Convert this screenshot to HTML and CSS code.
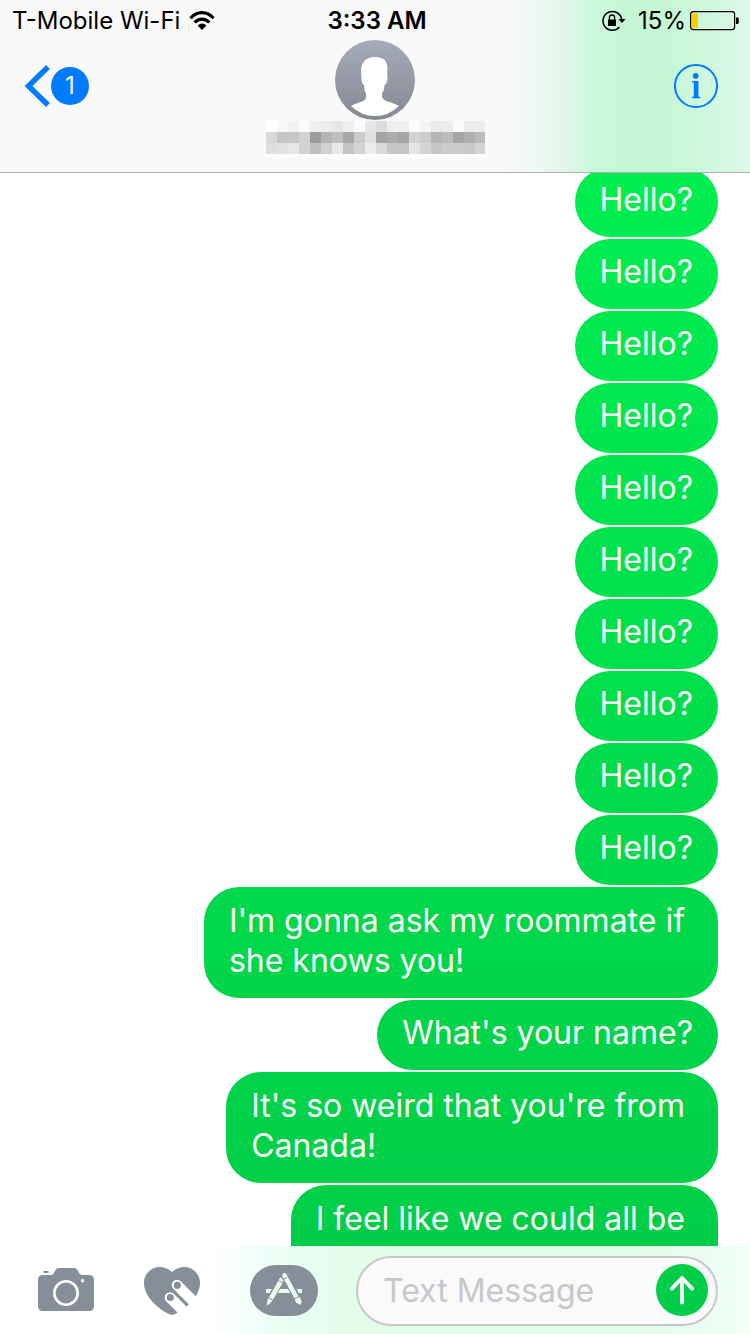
FILE: index.html
```html
<!DOCTYPE html>
<html lang="en">
<head>
<meta charset="utf-8">
<meta name="viewport" content="width=device-width, initial-scale=1">
<title>Messages</title>
<link rel="stylesheet" href="styles.css">
</head>
<body>
<div class="screen">
  <header class="header">
    <div class="status">
      <div class="status-side">
        <span>T-Mobile Wi-Fi</span>
        <svg class="wifi" width="26" height="20" viewBox="0 0 26 20" role="img" aria-label="Wi-Fi">
          <g fill="none" stroke="#000" stroke-width="3.200">
            <path d="M1.500 7.200C8-.2 18-.2 24.500 7.200"/>
            <path d="M5.600 11.500C10 6.900 16 6.900 20.400 11.500"/>
          </g>
          <path d="M8.600 14.600Q13 10.600 17.400 14.600L13 19Z"/>
        </svg>
      </div>
      <time class="clock">3:33 AM</time>
      <div class="status-side status-right">
        <svg width="24" height="22" viewBox="0 0 24 22" role="img" aria-label="Rotation locked">
          <path d="M17.500 17A9.400 9.400 0 1 1 19.600 9" fill="none" stroke="#000" stroke-width="1.500"/>
          <path d="M16.500 9h7L20 13Z"/>
          <rect x="6" y="9.500" width="8" height="6.500" rx=".6"/>
          <path d="M7.400 10V7.600a2.600 2.600 0 0 1 5.200 0V10" fill="none" stroke="#000" stroke-width="1.300"/>
        </svg>
        <span class="percent">15%</span>
        <svg class="battery" width="49" height="20" viewBox="0 0 49 20" role="img" aria-label="Battery">
          <rect x=".6" y=".7" width="44" height="18" rx="2.600" fill="none" stroke="#000" stroke-width="1.200"/>
          <rect x="2" y="2.200" width="6" height="15" rx="1.400" fill="#fc0"/>
          <path d="M46 6.500h1.400q1.400 0 1.400 1.400v3.600q0 1.400-1.400 1.400H46Z"/>
        </svg>
      </div>
    </div>
    <nav class="nav">
      <button class="back" type="button" aria-label="Back, 1 unread">
        <svg width="26" height="42" viewBox="0 0 26 42"><path d="M24 2 4.500 21 24 40" fill="none" stroke="#007aff" stroke-width="5.400"/></svg>
        <span class="badge">1</span>
      </button>
      <div class="contact">
        <svg width="80" height="80" viewBox="0 0 80 80" role="img" aria-label="Contact photo">
          <defs><linearGradient id="tone" x2="0" y2="1"><stop stop-color="#a5abb9"/><stop offset="1" stop-color="#858993"/></linearGradient></defs>
          <circle cx="40" cy="40" r="40" fill="url(#tone)"/>
          <path fill="#fff" d="M16 66Q19 64 24 62.500C29 61 31 60 31 57V53C29 51 29.500 47 29 45C27 44 26 40 26.500 36.500C26 33 25.500 28 27 25C29 19 35 17 40 17C46 17 51 19 52 25C53 29 51.500 33 52.500 37C52.500 41 51 45 49.500 45C49 49 49 51 47 53V57C48 60 52 61.500 56 62.500Q61 64 64 66Q54 76 40 76T16 66Z"/>
        </svg>
        <svg class="mosaic" width="219" height="37" viewBox="0 0 219 37" shape-rendering="crispEdges" aria-hidden="true">
          <rect width="219" height="37" fill="#fdfdfd"/>
          <g id="mosaic"></g>
        </svg>
      </div>
      <button class="info" type="button" aria-label="Details">
        <svg width="44" height="44" viewBox="0 0 44 44" fill="#007aff">
          <circle cx="22" cy="22" r="21" fill="none" stroke="#007aff" stroke-width="2"/>
          <circle cx="21.700" cy="11.800" r="2.900"/>
          <path d="M18 17h6.400v15.600l1.800.4v1.200H18V33l1.800-.4V18.600L18 18.200Z"/>
        </svg>
      </button>
    </nav>
  </header>

  <main class="thread">
    <p class="bubble">Hello?</p>
    <p class="bubble">Hello?</p>
    <p class="bubble">Hello?</p>
    <p class="bubble">Hello?</p>
    <p class="bubble">Hello?</p>
    <p class="bubble">Hello?</p>
    <p class="bubble">Hello?</p>
    <p class="bubble">Hello?</p>
    <p class="bubble">Hello?</p>
    <p class="bubble">Hello?</p>
    <p class="bubble bubble-tall">I'm gonna ask my roommate if<br>she knows you!</p>
    <p class="bubble">What's your name?</p>
    <p class="bubble bubble-tall">It's so weird that you're from<br>Canada!</p>
    <p class="bubble bubble-tall">I feel like we could all be<br>&nbsp;</p>
  </main>

  <form class="composer">
    <button class="tool" type="button" aria-label="Camera">
      <svg width="56" height="46" viewBox="0 0 56 46">
        <path fill="#868e99" d="M5 7h8q2 0 3-2l1.500-3Q18.500 0 21 0h15q2.500 0 3.500 2L41 5q1 2 3 2h7q5 0 5 5v26q0 5-5 5H5q-5 0-5-5V12Q0 7 5 7ZM5.500 3h5v2h-5Z"/>
        <circle cx="28" cy="25" r="11.700" fill="none" stroke="#fff" stroke-width="2.600"/>
        <circle cx="44.500" cy="12.700" r="1.700" fill="#fff"/>
      </svg>
    </button>
    <button class="tool" type="button" aria-label="Digital Touch">
      <svg width="56" height="48" viewBox="0 0 56 48">
        <defs><mask id="fingers"><rect width="56" height="48" fill="#fff"/><path d="M33 18 65 50M26 30.500 50 54.500" stroke="#000" stroke-width="10.600" stroke-linecap="round"/><circle cx="33.300" cy="18.300" r="3.600" fill="#fff"/><circle cx="26.300" cy="30.500" r="3.600" fill="#fff"/></mask></defs>
        <path mask="url(#fingers)" fill="#868e99" d="M28 5C24 1.500 20 0 16 0C7 0 0 7 0 16C0 29 13 41 24 46.500Q28 49 32 46.500C43 41 56 29 56 16C56 7 49 0 40 0C36 0 32 1.500 28 5Z"/>
      </svg>
    </button>
    <button class="tool tool-apps" type="button" aria-label="Apps">
      <svg width="68" height="52" viewBox="0 0 68 52">
        <rect width="68" height="51" rx="25.500" fill="#868e99"/>
        <path d="M16 26h36" stroke="#e9fdf1" stroke-width="4"/>
        <path d="M32 14 20 34M34.500 10 48 34" stroke="#868e99" stroke-width="7"/>
        <path d="M31.500 15 21 33.500" stroke="#e9fdf1" stroke-width="4.600" stroke-linecap="round"/>
        <path d="M34.500 10 47 33" stroke="#868e99" stroke-width="7"/>
        <path d="M34.500 10.500 46.500 32.500" stroke="#e9fdf1" stroke-width="4.600" stroke-linecap="round"/>
        <path fill="#e9fdf1" d="M18 33 22.500 35.500 19.500 39 16.500 40.500ZM44.500 34.500 50 32 51.500 36.500 51 40 46.500 38Z"/>
        <path d="M28.500 15.500 33 18M18 32.500 23.500 35.500M32 15 37 12.500M44 34 50 31" stroke="#868e99" stroke-width="1"/>
      </svg>
    </button>
    <div class="field">
      <input class="message" type="text" placeholder="Text Message" aria-label="Text Message">
      <button class="send" type="button" aria-label="Send">
        <svg width="52" height="52" viewBox="0 0 52 52"><path d="M26 38.500V14M15.800 24.600 26 14 36.200 24.600" fill="none" stroke="#fff" stroke-width="3.800" stroke-linecap="round" stroke-linejoin="round"/></svg>
      </button>
    </div>
  </form>
</div>
<script src="mosaic.js"></script>
</body>
</html>
```

FILE: mosaic.js
```js
// Grey levels of the obscured contact name, row by row.
const rows = [
  "ff f9 f2 fa ef ed e7 ef fb e7 dc ef ef fb f3 ea ed fb ed ed",
  "d9 c6 c6 d3 9c b4 be a7 cc e1 a4 ac a5 d2 cd b5 bd a6 b0 bc",
  "df e2 e7 d2 bf d1 e9 c3 d3 ec da c7 c5 e5 d5 c7 cc cc c8 d3"
];
const group = document.getElementById("mosaic");
rows.forEach((row, y) => row.split(" ").forEach((level, x) => {
  const cell = document.createElementNS("http://www.w3.org/2000/svg", "rect");
  cell.setAttribute("x", x * 11);
  cell.setAttribute("y", y * 11);
  cell.setAttribute("width", 11);
  cell.setAttribute("height", 11);
  cell.setAttribute("fill", "#" + level.repeat(3));
  group.appendChild(cell);
}));
```

FILE: styles.css
```css
* {
  box-sizing: border-box;
}

body {
  margin: 0;
  background: #fff;
  color: #000;
  font-family: Inter, "Liberation Sans", sans-serif;
}

button {
  padding: 0;
  border: 0;
  background: none;
  font: inherit;
}

svg {
  display: block;
  flex: none;
}

.screen {
  display: flex;
  flex-direction: column;
  height: 100vh;
}

.header {
  position: relative;
  z-index: 1;
  flex: none;
  padding-bottom: 14px;
  border-bottom: 1px solid #b2b2b2;
  background: linear-gradient(90deg, #f9f9f9 65%, #f3f8f5 70%, #e2f7ea 75%, #caf8dc 79%, #c6f7d4 84%, #c6f7d5 89%, #cff8de 94%, #dff7e8 100%);
}

.status {
  display: grid;
  grid-template-columns: 1fr auto 1fr;
  align-items: center;
  height: 40px;
  padding: 1px 11px 0 12px;
  font-size: 24px;
  line-height: 39px;
}

.status-side {
  display: flex;
  align-items: center;
}

.status-right {
  justify-content: flex-end;
}

.wifi {
  margin-left: 9px;
}

.clock {
  padding-left: 3px;
  font-weight: 600;
}

.percent {
  margin: 0 4px 0 12px;
}

.nav {
  display: grid;
  grid-template-columns: 1fr auto 1fr;
  align-items: start;
  padding: 0 32px 0 24px;
}

.back {
  display: flex;
  align-items: center;
  justify-self: start;
  gap: 1px;
  height: 44px;
  margin-top: 24px;
}

.badge {
  width: 38px;
  height: 38px;
  border-radius: 50%;
  background: #007aff;
  color: #fff;
  font-size: 24px;
  line-height: 38px;
  text-align: center;
}

.contact {
  display: flex;
  flex-direction: column;
  align-items: center;
  gap: 1px;
  margin-left: 8px;
}

.info {
  justify-self: end;
  margin-top: 24px;
}

.thread {
  display: flex;
  flex: 1;
  flex-direction: column;
  align-items: flex-end;
  gap: 2px;
  min-height: 0;
  margin-top: -6px;
  padding-right: 32px;
  overflow: hidden;
}

.bubble {
  flex: none;
  margin: 0;
  padding: 13px 25px 17px;
  border-radius: 35px;
  background: linear-gradient(#00f352, #00cb47) fixed;
  color: #fff;
  font-size: 32px;
  font-weight: 400;
  line-height: 40px;
}

.bubble-tall {
  padding: 14px 33px 17px 25px;
}

.composer {
  display: flex;
  flex: none;
  align-items: center;
  height: 88px;
  padding: 2px 32px 0 38px;
  background: linear-gradient(90deg, #fff 28%, #f2fff9 34%, #e6fdf0 41%, #e2fde7 53%, #e2fde7 85%, #e8fdf0 92%, #f3fff8 100%);
}

.tool {
  flex: none;
  margin-right: 50px;
}

.tool-apps {
  margin-right: 38px;
}

.field {
  display: flex;
  flex: 1;
  align-items: center;
  min-width: 0;
  height: 70px;
  padding: 0 8px 0 25px;
  border: 2px solid #c8c7cc;
  border-radius: 35px;
  background: #fafafa;
}

.message {
  flex: 1;
  min-width: 0;
  padding: 0;
  border: 0;
  outline: 0;
  background: none;
  font: 400 32px/40px Inter, "Liberation Sans", sans-serif;
}

.message::placeholder {
  color: #c7c7cc;
  opacity: 1;
}

.send {
  flex: none;
  margin-bottom: 2px;
  border-radius: 50%;
  background: #00ce48;
}
```
